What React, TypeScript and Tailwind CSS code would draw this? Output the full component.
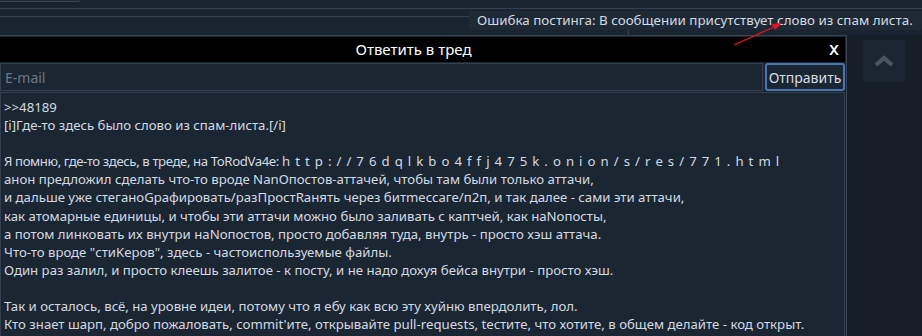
import React from "react";

const font = { fontFamily: '"Noto Sans", "Open Sans", sans-serif' };

const lines = [
  ">>48189",
  "[i]Где-то здесь было слово из спам-листа.[/i]",
  "",
  "URL",
  "анон предложил сделать что-то вроде NanОпостов-аттачей, чтобы там были только аттачи,",
  "и дальше уже cтеганоGрафировать/разПростRанять через битmессаге/п2п, и так далее - сами эти аттачи,",
  "как атомарные единицы, и чтобы эти аттачи можно было заливать с каптчей, как наNопосты,",
  "а потом линковать их внутри наNопостов, просто добавляя туда, внутрь - просто хэш аттача.",
  "Что-то вроде \"стиKеров\", здесь - частоиспользуемые файлы.",
  "Один раз залил, и просто клеешь залитое - к посту, и не надо дохуя бейса внутри - просто хэш.",
  "",
  "Так и осталось, всё, на уровне идеи, потому что я ебу как всю эту хуйню впердолить, лол.",
  "Кто знает шарп, добро пожаловать, commit'ите, открывайте pull-requests, tecтите, что хотите, в общем делайте - код открыт.",
];

const url = "h t t p : / / 7 6 d q l k b o 4 f f j 4 7 5 k . o n i o n / s / r e s / 7 7 1 . h t m l";

function TopBar() {
  return (
    <div className="relative h-[35px] bg-[#1a2430]">
      <div className="h-[2px] w-[80px] rounded-br-[3px] border-b border-r border-[#3a4652] bg-[#1f2a36]" />
      <div className="mt-[6px] h-px bg-[#34404c]" />
      <div className="flex">
        <div className="mt-[7px] h-px flex-1 bg-[#34404c]" />
        <div className="mt-[2px] flex h-[19px] w-[453px] items-center bg-[#1e2936] pl-[8px] text-[13.4px] text-[#d4dae0]">
          Ошибка постинга: В сообщении присутствует слово из спам листа.
        </div>
      </div>
      <div className="ml-[628px] h-[6px] w-px bg-[#34404c]" />
    </div>
  );
}

function ReplyForm() {
  return (
    <div className="ml-[-2px] w-[849px] border border-[#394552] bg-[#1b2633] p-px">
      <div className="flex h-[25px] items-center bg-black text-[15px] text-white">
        <div className="flex-1 pl-[4px] text-center">Ответить в тред</div>
        <div className="w-[22px] text-center font-semibold">X</div>
      </div>
      <div className="mt-px flex gap-[2px]">
        <div className="flex h-[28px] flex-1 items-center border border-[#34404d] pl-[4px] text-[14px] text-[#6c7781]">
          E-mail
        </div>
        <div className="flex h-[28px] w-[80px] items-center justify-center rounded-[3px] border-2 border-[#4876b3] text-[14px] text-[#d6dde4]">
          Отправить
        </div>
      </div>
      <div className="mt-px h-[260px] border border-[#34404d] px-[3px] pt-[5px] text-[13.2px] leading-[18.1px] text-[#d3dae2]">
        {lines.map((l, i) =>
          l === "URL" ? (
            <div key={i} className="h-[18.1px] whitespace-pre">
              <span className="tracking-[-0.4px]">Я помню, где-то здесь, в треде, на ToRodVa4e: </span>
              <span className="tracking-[0.8px]">{url}</span>
            </div>
          ) : (
            <div key={i} className="h-[18.1px] whitespace-pre">
              {l}
            </div>
          )
        )}
      </div>
    </div>
  );
}

export default function App() {
  return (
    <div className="relative h-[336px] w-[922px] overflow-hidden bg-[#161e27]" style={font}>
      <TopBar />
      <div className="flex">
        <ReplyForm />
        <div className="pl-[16px] pt-[5px]">
          <div className="flex h-[42px] w-[42px] items-center justify-center rounded-[3px] bg-[#1c2632]">
            <svg width="20" height="12" viewBox="0 0 20 12" fill="none">
              <path d="M2 10 L10 3 L18 10" stroke="#4b5560" strokeWidth="4" />
            </svg>
          </div>
        </div>
      </div>
      <svg className="absolute left-0 top-0" width="922" height="60" viewBox="0 0 922 60">
        <line x1="734" y1="45" x2="774" y2="27" stroke="#e0141e" strokeWidth="1.3" />
        <polygon points="782,23 771,24 775,30" fill="#e0141e" />
      </svg>
    </div>
  );
}
